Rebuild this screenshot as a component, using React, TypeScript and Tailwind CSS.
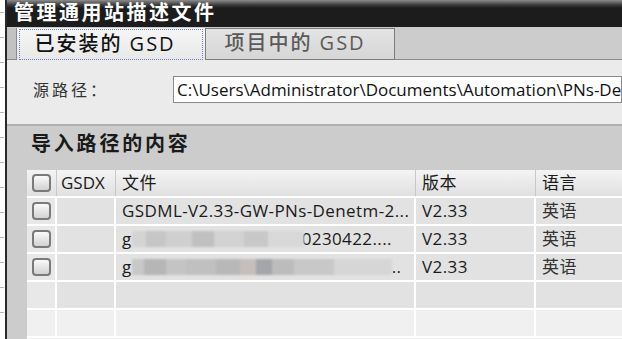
const FONT = "font-['Open_Sans','Noto_Sans_CJK_SC',sans-serif]"

type Row = {
  file: React.ReactNode
  version: string
  lang: string
}

function Checkbox() {
  return (
    <span className="block h-[18px] w-[19px] rounded-[4px] border-2 border-[#7a7a7a] bg-[linear-gradient(#fafafa,#e4e4e4_55%,#d2d2d2)]" />
  )
}

function Blur({ widths }: { widths: [number, string][] }) {
  return (
    <span className="inline-flex h-[18px] items-center blur-[1px]">
      {widths.map(([w, c], i) => (
        <span key={i} className="block h-[16px]" style={{ width: w, background: c }} />
      ))}
    </span>
  )
}

const rows: Row[] = [
  { file: 'GSDML-V2.33-GW-PNs-Denetm-2...', version: 'V2.33', lang: '英语' },
  {
    file: (
      <span className="flex items-center">
        g
        <Blur
          widths={[
            [14, '#d4d4d4'],
            [20, '#c6c6c6'],
            [26, '#cfcfcf'],
            [22, '#c0c0c0'],
            [30, '#d2d2d2'],
            [24, '#c8c8c8'],
            [36, '#d8d8d8'],
          ]}
        />
        <span className="-ml-[2px]">0230422....</span>
      </span>
    ),
    version: 'V2.33',
    lang: '英语',
  },
  {
    file: (
      <span className="flex items-center">
        g
        <Blur
          widths={[
            [12, '#c8c8c8'],
            [22, '#b6b6b6'],
            [20, '#c4c4c4'],
            [30, '#c0c0c0'],
            [24, '#b8b8b8'],
            [16, '#c4bfbb'],
            [16, '#a4a6aa'],
            [22, '#bcbcbc'],
            [40, '#c8c8c8'],
            [58, '#d6d6d6'],
          ]}
        />
        ..
      </span>
    ),
    version: 'V2.33',
    lang: '英语',
  },
]

const COLS = 'grid h-[28px] grid-cols-[30px_59px_300px_120px_1fr] border-b-2 border-white'

export default function App() {
  return (
    <div className={`flex h-[339px] w-[622px] overflow-hidden bg-white ${FONT}`}>
      <div className="flex w-[5px] shrink-0 flex-col gap-[24px] bg-white pt-[12px]">
        {Array.from({ length: 13 }).map((_, i) => (
          <span key={i} className="block h-px w-[4px] bg-[#b8b8b8]" />
        ))}
      </div>
      <div className="w-[2px] shrink-0 bg-[#2a2a2a]" />
      <div className="flex min-w-0 flex-1 flex-col">
        <div className="h-[27px] shrink-0 overflow-hidden whitespace-nowrap bg-[linear-gradient(#8c8c8c,#3a3a3a_5px,#1c1c1c_8px)] pl-[7px] text-[20px] font-bold leading-[25px] tracking-[2.5px] text-white">
          管理通用站描述文件
        </div>
        <div className="flex h-[33px] shrink-0 bg-[#cccccc] pt-[1px]">
          <div className="w-[10px] shrink-0 border-r border-b border-[#8a8a8a] bg-[#c2c2c2]" />
          <div className="flex w-[188px] shrink-0 items-center justify-center bg-[linear-gradient(#f6f6f6,#e8e8e8)] px-[2px] pt-[1px]">
            <div className="flex h-full w-full items-center justify-center border border-dotted border-[#6b7fc4] pr-[12px] pb-[2px] text-[20px] font-medium tracking-[2px] text-[#111]">
              已安装的 GSD
            </div>
          </div>
          <div className="flex w-[190px] shrink-0 items-center justify-center border border-[#7c7c7c] bg-[linear-gradient(#e4e4e4,#d6d6d6)] pr-[10px] pb-[2px] text-[20px] font-medium tracking-[2px] text-[#5a5a5a]">
            项目中的 GSD
          </div>
          <div className="flex-1 border-b border-[#8a8a8a]" />
        </div>
        <div className="flex h-[64px] shrink-0 items-center bg-[#ebebeb] pb-[5px]">
          <span className="w-[166px] shrink-0 pl-[26px] text-[16px] tracking-[3px] text-[#333]">源路径：</span>
          <div className="flex h-[27px] min-w-0 flex-1 items-center overflow-hidden whitespace-nowrap border border-[#8a8a8a] bg-white pl-[3px] text-[17px] text-[#111]">
            C:\Users\Administrator\Documents\Automation\PNs-Denetm
          </div>
        </div>
        <div className="flex min-h-0 flex-1 flex-col border-t-2 border-[#b0b0b0] bg-[#cccccc]">
          <div className="h-[44px] shrink-0 pl-[24px] pt-[3px] text-[20px] font-bold tracking-[2.8px] text-[#1a1a1a]">
            导入路径的内容
          </div>
          <div className="ml-[20px] flex-1 bg-[#f0f0f0] text-[17px] tracking-[0.4px] text-[#1a1a1a]">
            <div className={`${COLS} bg-[linear-gradient(#f4f4f4,#e0e0e0)]`}>
              <div className="flex items-center justify-center border-r border-[#c8c8c8]">
                <Checkbox />
              </div>
              <div className="flex items-center border-r border-[#c8c8c8] pl-[4px] tracking-normal">GSDX</div>
              <div className="flex items-center border-r border-[#c8c8c8] pl-[6px]">文件</div>
              <div className="flex items-center border-r border-[#c8c8c8] pl-[6px]">版本</div>
              <div className="flex items-center pl-[6px]">语言</div>
            </div>
            {rows.map((r, i) => (
              <div key={i} className={`${COLS} bg-[#e2e2e2]`}>
                <div className="flex items-center justify-center border-r-2 border-white bg-[#e8e8e8]">
                  <Checkbox />
                </div>
                <div className="border-r-2 border-white" />
                <div className="flex items-center overflow-hidden whitespace-nowrap border-r-2 border-white pl-[6px]">
                  {r.file}
                </div>
                <div className="flex items-center border-r-2 border-white pl-[6px]">{r.version}</div>
                <div className="flex items-center pl-[6px] text-[#333]">{r.lang}</div>
              </div>
            ))}
            <div className={`${COLS} bg-[#e2e2e2]`}>
              <div className="border-r-2 border-white bg-[#e8e8e8]" />
              <div className="border-r-2 border-white" />
              <div className="border-r-2 border-white" />
              <div className="border-r-2 border-white" />
              <div />
            </div>
            <div className={`${COLS} bg-[#f0f0f0]`}>
              <div className="border-r-2 border-white" />
              <div className="border-r-2 border-white" />
              <div className="border-r-2 border-white" />
              <div className="border-r-2 border-white" />
              <div />
            </div>
          </div>
        </div>
      </div>
    </div>
  )
}
